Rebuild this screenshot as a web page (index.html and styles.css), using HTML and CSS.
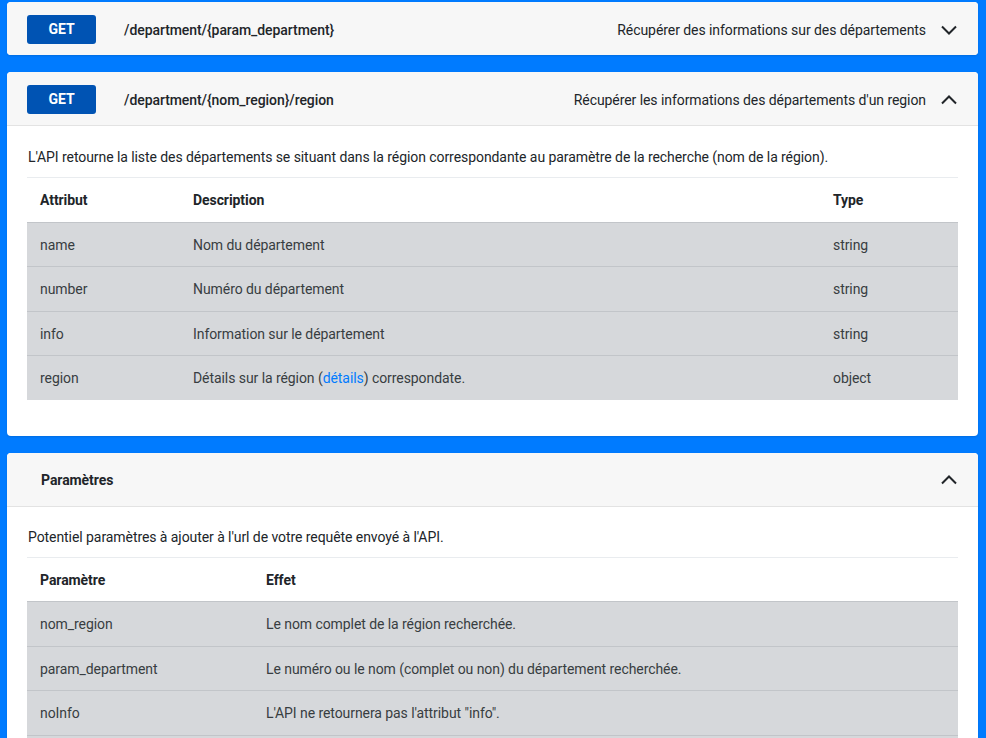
FILE: index.html
```html
<!DOCTYPE html>
<html lang="fr">
<head>
<meta charset="utf-8">
<title>API départements</title>
<link rel="stylesheet" href="styles.css">
</head>
<body>
<main class="page">
  <section class="card">
    <header class="card-header">
      <span class="method">GET</span>
      <span class="path">/department/{param_department}</span>
      <span class="summary">Récupérer des informations sur des départements</span>
      <svg class="chevron" viewBox="0 0 16 10" width="16" height="10"><path d="M1 1.5 L8 8.5 L15 1.5" fill="none" stroke="#212529" stroke-width="2"/></svg>
    </header>
  </section>

  <section class="card">
    <header class="card-header open">
      <span class="method">GET</span>
      <span class="path">/department/{nom_region}/region</span>
      <span class="summary">Récupérer les informations des départements d'un region</span>
      <svg class="chevron" viewBox="0 0 16 10" width="16" height="10"><path d="M1 8.5 L8 1.5 L15 8.5" fill="none" stroke="#212529" stroke-width="2"/></svg>
    </header>
    <div class="card-body">
      <p class="intro">L'API retourne la liste des départements se situant dans la région correspondante au paramètre de la recherche (nom de la région).</p>
      <table class="table">
        <thead>
          <tr><th class="c-attr">Attribut</th><th class="c-desc">Description</th><th>Type</th></tr>
        </thead>
        <tbody>
          <tr><td>name</td><td>Nom du département</td><td>string</td></tr>
          <tr><td>number</td><td>Numéro du département</td><td>string</td></tr>
          <tr><td>info</td><td>Information sur le département</td><td>string</td></tr>
          <tr><td>region</td><td>Détails sur la région (<a href="#" class="link">détails</a>) correspondate.</td><td>object</td></tr>
        </tbody>
      </table>
    </div>
  </section>

  <section class="card">
    <header class="card-header open params">
      <span class="params-title">Paramètres</span>
      <svg class="chevron" viewBox="0 0 16 10" width="16" height="10"><path d="M1 8.5 L8 1.5 L15 8.5" fill="none" stroke="#212529" stroke-width="2"/></svg>
    </header>
    <div class="card-body">
      <p class="intro">Potentiel paramètres à ajouter à l'url de votre requête envoyé à l'API.</p>
      <table class="table">
        <thead>
          <tr><th class="c-param">Paramètre</th><th>Effet</th></tr>
        </thead>
        <tbody>
          <tr><td>nom_region</td><td>Le nom complet de la région recherchée.</td></tr>
          <tr><td>param_department</td><td>Le numéro ou le nom (complet ou non) du département recherchée.</td></tr>
          <tr><td>noInfo</td><td>L'API ne retournera pas l'attribut "info".</td></tr>
          <tr><td>&nbsp;</td><td>&nbsp;</td></tr>
        </tbody>
      </table>
    </div>
  </section>
</main>
</body>
</html>
```

FILE: styles.css
```css
html, body {
  margin: 0;
  padding: 0;
  background: #007bff;
}

body {
  font-family: Roboto, "Liberation Sans", Arial, sans-serif;
  font-size: 14px;
  line-height: 21px;
  letter-spacing: -0.07px;
  color: #212529;
}

.page {
  display: flex;
  flex-direction: column;
  gap: 17px;
  padding: 2px 8px 40px 7px;
}

.card {
  background: #fff;
  border-radius: 4px;
  overflow: hidden;
  box-shadow: 0 1px 2px rgba(0, 0, 0, 0.12);
}

.card-header {
  display: flex;
  align-items: center;
  height: 53px;
  box-sizing: border-box;
  padding: 2px 20px 0 20px;
  background: #f7f7f7;
}

.card-header.open {
  border-bottom: 1px solid #e3e3e3;
  height: 54px;
}

.card-header.params {
  height: 54px;
  padding-top: 1px;
}

.method {
  width: 69px;
  height: 29px;
  display: flex;
  align-items: center;
  justify-content: center;
  background: #0053b3;
  color: #fff;
  font-weight: 700;
  border-radius: 3px;
  font-size: 14px;
  letter-spacing: 0;
}

.path {
  margin-left: 28px;
  font-weight: 500;
  color: #212529;
  padding-top: 2px;
}

.summary {
  margin-left: auto;
  color: #212529;
  padding-top: 2px;
}

.chevron {
  margin-left: 15px;
  margin-right: 1px;
  display: block;
}

.params-title {
  margin-left: 14px;
  font-weight: 700;
  padding-top: 2px;
}

.params .chevron {
  margin-left: auto;
}

.card-body {
  padding: 21px 20px 20px 20px;
}

.params + .card-body {
  padding-top: 20px;
}

.intro {
  margin: 0 0 9px 1px;
}

.table {
  width: 100%;
  border-collapse: collapse;
  margin-bottom: 16px;
}

.table th,
.table td {
  box-sizing: border-box;
  text-align: left;
  padding: 12px 12px 10.5px 12px;
  line-height: 21px;
  vertical-align: top;
}

.table th:first-child,
.table td:first-child {
  padding-left: 13px;
}

.table thead th {
  font-weight: 700;
  border-top: 1px solid #e9ecef;
  color: #212529;
}

.table tbody td {
  background: #d6d8db;
  color: #383d41;
  border-top: 1px solid #c2c5c9;
}

.c-attr { width: 154px; }
.c-desc { width: 640px; }
.c-param { width: 227px; }

.link {
  color: #007bff;
  text-decoration: none;
}
```
